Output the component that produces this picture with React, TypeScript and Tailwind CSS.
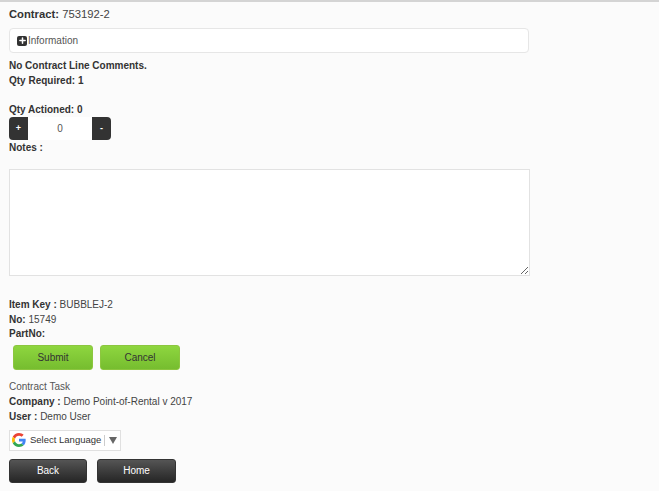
import { Plus } from "lucide-react";

function GoogleG() {
  return (
    <svg width="14" height="14" viewBox="0 0 48 48" className="shrink-0">
      <path fill="#EA4335" d="M24 9.5c3.5 0 6.700 1.300 9.100 3.500l6.800-6.800C35.800 2.400 30.300 0 24 0 14.600 0 6.500 5.400 2.600 13.200l7.900 6.100C12.400 13.700 17.700 9.500 24 9.500z" />
      <path fill="#4285F4" d="M46.900 24.500c0-1.600-.1-3.100-.4-4.500H24v9h12.900c-.6 3-2.200 5.500-4.700 7.200l7.700 6c4.400-4.100 7-10.100 7-17.700z" />
      <path fill="#FBBC05" d="M10.500 28.700c-.5-1.400-.8-3-.8-4.700s.3-3.200.8-4.700l-7.900-6.100C.9 16.500 0 20.100 0 24s.9 7.500 2.600 10.800l7.900-6.100z" />
      <path fill="#34A853" d="M24 48c6.500 0 11.900-2.100 15.900-5.800l-7.700-6c-2.200 1.400-4.900 2.300-8.200 2.300-6.300 0-11.600-4.200-13.500-9.800l-7.900 6.100C6.500 42.600 14.600 48 24 48z" />
    </svg>
  );
}

function Label({ name, value }: { name: string; value?: string }) {
  return (
    <div className="h-[14.5px] leading-[14.5px]">
      <b className="text-[#333]">{name}</b> {value}
    </div>
  );
}

export default function App() {
  return (
    <div className="min-h-[491px] border-t-2 border-[#d4d4d4] bg-[#fbfbfb] px-[9px] pt-[4px] font-['Liberation_Sans',Arial,sans-serif] text-[10px] text-[#444]">
      <div className="text-[11.250px] leading-[16px]">
        <b className="text-[#333]">Contract:</b> 753192-2
      </div>

      <div className="mt-[6px] flex h-[25px] w-[520px] items-center gap-[1px] rounded border border-[#e6e6e6] bg-white pl-[7px] text-[#555]">
        <span className="flex h-[10px] w-[10px] items-center justify-center rounded-[2px] bg-[#333]">
          <Plus size={9} color="#fff" strokeWidth={4} />
        </span>
        Information
      </div>

      <div className="mt-[5px]">
        <div className="h-[15px] leading-[15px] font-bold text-[#333]">No Contract Line Comments.</div>
        <div className="h-[15px] leading-[15px] font-bold text-[#333]">Qty Required: 1</div>
        <div className="mt-[14px] h-[15px] leading-[15px] font-bold text-[#333]">Qty Actioned: 0</div>
      </div>

      <div className="flex h-[23px] w-[102px]">
        <div className="flex w-[19px] items-center justify-center rounded-l bg-[#333] text-[9px] font-bold text-white">+</div>
        <div className="flex flex-1 items-center justify-center bg-white text-[#555]">0</div>
        <div className="flex w-[19px] items-center justify-center rounded-r bg-[#333] text-[9px] font-bold text-white">-</div>
      </div>

      <div className="h-[15px] leading-[15px] font-bold text-[#333]">Notes :</div>

      <textarea className="mt-[14px] block h-[107px] w-[521px] border border-[#e2e2e2] bg-white outline-none" />

      <div className="mt-[22px]">
        <Label name="Item Key :" value="BUBBLEJ-2" />
        <Label name="No:" value="15749" />
        <Label name="PartNo:" />
      </div>

      <div className="mt-[3px] ml-[4px] flex gap-[7px]">
        <button className="h-[25px] w-[80px] rounded-[3px] border border-[#8cc63f] bg-gradient-to-b from-[#8ed63f] to-[#76bd2f] text-[10px] text-[#333]">
          Submit
        </button>
        <button className="h-[25px] w-[80px] rounded-[3px] border border-[#8cc63f] bg-gradient-to-b from-[#8ed63f] to-[#76bd2f] text-[10px] text-[#333]">
          Cancel
        </button>
      </div>

      <div className="mt-[9px]">
        <div className="h-[15px] leading-[15px] text-[#555]">Contract Task</div>
        <div className="h-[15px] leading-[15px]"><b className="text-[#333]">Company :</b> Demo Point-of-Rental v 2017</div>
        <div className="h-[15px] leading-[15px]"><b className="text-[#333]">User :</b> Demo User</div>
      </div>

      <div className="mt-[6px] flex h-[21px] w-[112px] items-center border border-[#e0e0e0] bg-white pl-[2px] text-[#333]">
        <GoogleG />
        <span className="ml-[4px] whitespace-nowrap text-[9.500px]">Select Language</span>
        <span className="ml-[3px] h-[11px] border-l border-[#ccc]" />
        <span className="ml-[4px] h-0 w-0 border-x-[4px] border-t-[7px] border-x-transparent border-t-[#666]" />
      </div>

      <div className="mt-[8px] flex gap-[10px]">
        <button className="h-[24px] w-[78px] rounded-[3px] border border-[#333] bg-gradient-to-b from-[#555] to-[#262626] text-[10px] text-white">
          Back
        </button>
        <button className="h-[24px] w-[79px] rounded-[3px] border border-[#333] bg-gradient-to-b from-[#555] to-[#262626] text-[10px] text-white">
          Home
        </button>
      </div>
    </div>
  );
}
